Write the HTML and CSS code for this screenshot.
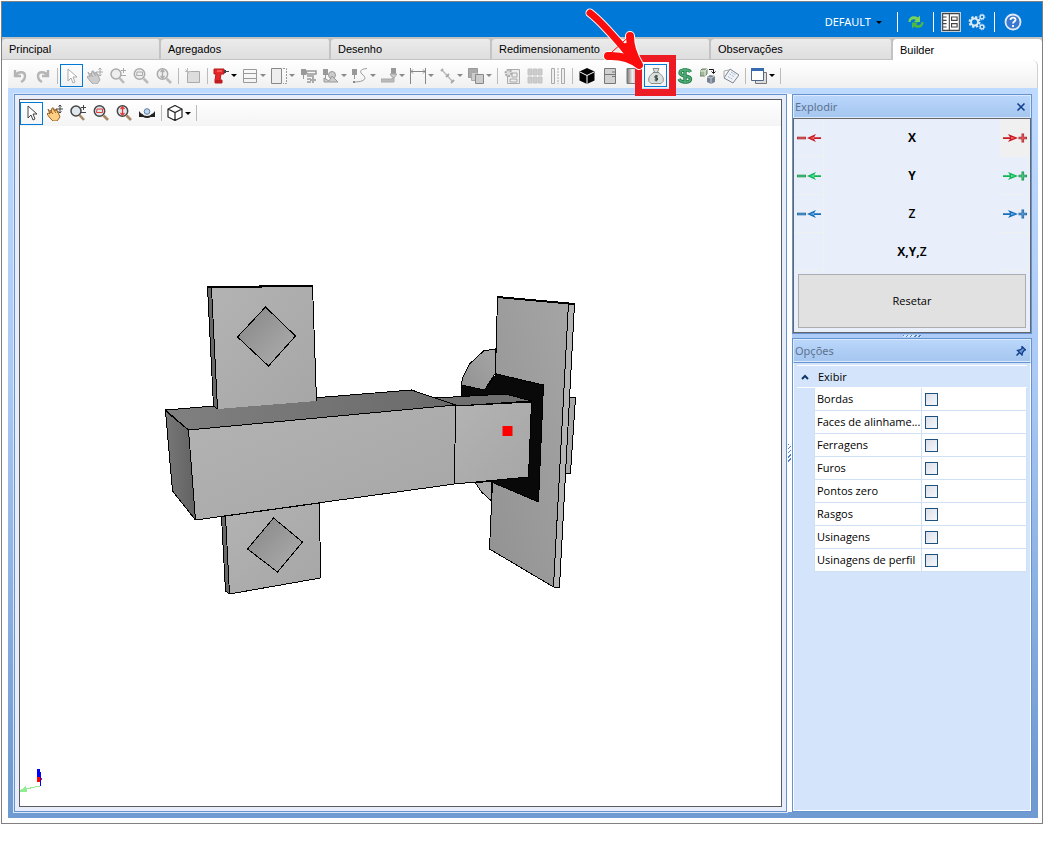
FILE: index.html
```html
<!DOCTYPE html>
<html lang="pt-BR">
<head>
<meta charset="utf-8">
<title>Builder</title>
<link rel="stylesheet" href="styles.css">
</head>
<body>
<svg class="defs" aria-hidden="true">
  <defs>
    <linearGradient id="steel"><stop offset="0" stop-color="#777"/><stop offset=".45" stop-color="#eee"/><stop offset="1" stop-color="#999"/></linearGradient>
    <linearGradient id="front" x1="0" y1="0" x2="1" y2="1"><stop offset="0" stop-color="#b3b3b3"/><stop offset="1" stop-color="#a6a6a6"/></linearGradient>
    <linearGradient id="plate" x1="0" y1="1" x2="1" y2="0"><stop offset="0" stop-color="#929292"/><stop offset="1" stop-color="#a5a5a5"/></linearGradient>
    <linearGradient id="pocket" x1="0" y1="0" x2="1" y2="1"><stop offset="0" stop-color="#858585"/><stop offset="1" stop-color="#b0b0b0"/></linearGradient>
    <linearGradient id="top"><stop offset="0" stop-color="#808080"/><stop offset="1" stop-color="#6a6a6a"/></linearGradient>
    <linearGradient id="side"><stop offset="0" stop-color="#777"/><stop offset="1" stop-color="#626262"/></linearGradient>
    <symbol id="undo" viewBox="0 0 16 16"><path d="M3 2v6h6M3 8c3-5 10-5 10 0 0 3-2 5-4 6" fill="none" stroke="#b5b5b5" stroke-width="2.4"/></symbol>
    <symbol id="redo" viewBox="0 0 16 16"><path d="M13 2v6H7M13 8C10 3 3 3 3 8c0 3 2 5 4 6" fill="none" stroke="#b5b5b5" stroke-width="2.4"/></symbol>
    <symbol id="cursor" viewBox="0 0 16 16"><path d="M4 1v12l3-3 2 5 2-1-2-5h4z" fill="#fff" stroke="currentColor"/></symbol>
    <symbol id="hand" viewBox="0 0 16 16"><path d="M1 4l3 4 1-5 1.500 0L8 6l1-2 2 3 2 5-3 4H6l-3-3-3-4 1-1 2 1z" fill="var(--skin,#ccc)" stroke="var(--line,#aaa)"/><path d="M3 5l3 4M6 4l3 4M9 4l2 4" stroke="var(--line,#aaa)"/><path d="M13 0v8M9 4h7M11.500 1.500L13 0l1.500 1.500M11.500 6.500L13 8l1.500-1.500" fill="none" stroke="currentColor"/></symbol>
    <symbol id="lens" viewBox="0 0 16 16"><circle cx="6.500" cy="6" r="5.200" fill="var(--glass,#eee)" stroke="currentColor" stroke-width="1.500"/><path d="M10.500 10.500l4.500 4.500" stroke="var(--handle,#bbb)" stroke-width="2.600"/></symbol>
    <symbol id="zoompm" viewBox="0 0 16 16"><circle cx="6" cy="6" r="5" fill="var(--glass,#eee)" stroke="currentColor" stroke-width="1.500"/><path d="M9.500 10l4.500 5" stroke="var(--handle,#bbb)" stroke-width="2.600"/><path d="M13.500 0v5M11 2.500h5M11 7.500h5" stroke="currentColor"/></symbol>
    <symbol id="zoomwin" viewBox="0 0 16 16"><use href="#lens"/><path d="M4 4h5.500v3.500H3.500z" fill="none" stroke="var(--mark,#aaa)"/></symbol>
    <symbol id="zoomfit" viewBox="0 0 16 16"><use href="#lens"/><path d="M6.500 2v8M4.500 4l2-2 2 2M4.500 8l2 2 2-2" fill="none" stroke="var(--mark,#aaa)" stroke-width="1.300"/></symbol>
    <symbol id="new" viewBox="0 0 16 16"><path d="M2.500 3.500h12v11h-12z" fill="#ddd" stroke="#aaa"/><path d="M2.500 0v6M0 3.500h6M.5 1.500l4 4" stroke="#bbb"/></symbol>
    <symbol id="drill" viewBox="0 0 16 16"><path d="M1 1h10v5H8L7 12h2v3H2v-3l1-6H1z" fill="#e8262a" stroke="#b51a1a"/><path d="M11 2h2v3h-2zM13 3h3v1h-3z" fill="#444"/><path d="M2 13.500h7" stroke="#c01d20" stroke-width="3"/><path d="M4 3h5" stroke="#ff8d89"/></symbol>
    <symbol id="rows" viewBox="0 0 16 16"><path d="M1.500 1.500h13v13h-13zM1 5.500h14M1 10.500h14" fill="none" stroke="#999"/></symbol>
    <symbol id="cols" viewBox="0 0 16 16"><path d="M.5.5h10v15H.5z" fill="#eee" stroke="#888"/><path d="M12 .5h3.500v15H12" fill="none" stroke="#999" stroke-dasharray="2 1"/></symbol>
    <symbol id="spindle-list" viewBox="0 0 16 16"><path d="M0 1h5v6H0zM2 7h1v4H2z" fill="#999"/><path d="M5 3h10v3H6zM6 8h7M6 11h4M6 14h4" fill="none" stroke="#999" stroke-width="1.500"/><path d="M12 9v6M9 12h6" stroke="#aaa" stroke-width="2"/></symbol>
    <symbol id="spindle-shape" viewBox="0 0 16 16"><path d="M0 1h5v6H0zM2 7h1v4H2z" fill="#999"/><circle cx="9" cy="7" r="3.500" fill="#ccc" stroke="#999"/><path d="M1 14V10l5 3 3-5 6 6z" fill="#ccc" stroke="#999"/></symbol>
    <symbol id="curve" viewBox="0 0 16 16"><path d="M0 1h5v6H0zM2 7h1v4H2z" fill="#999"/><path d="M15 .5C8 1 7 4 11 7s2 7-9 7" fill="none" stroke="#999"/><path d="M1 14h2" stroke="#888" stroke-width="2"/></symbol>
    <symbol id="chamfer" viewBox="0 0 16 16"><path d="M10 0h5v6h-5z" fill="#999"/><path d="M9 6h7l-3 4-2-1z" fill="#ccc" stroke="#aaa"/><path d="M0 11h10l3-1v4H0z" fill="#bbb" stroke="#aaa"/></symbol>
    <symbol id="dim" viewBox="0 0 16 16"><path d="M.5 0v16M15.500 0v16M1 3.500h14M3 1.500l-2 2 2 2M13 1.500l2 2-2 2" fill="none" stroke="#888"/></symbol>
    <symbol id="segment" viewBox="0 0 16 16"><path d="M3 2l11 12" stroke="#bbb" stroke-width="1.500"/><path d="M2 3l2-2M7 9l3-3M12 15l3-3" stroke="#aaa" stroke-width="2"/></symbol>
    <symbol id="layers" viewBox="0 0 16 16"><path d="M.5.500h9v9h-9z" fill="#aaa" stroke="#999"/><path d="M3.500 4.500h6v8h-6z" fill="#ccc" stroke="#aaa"/><path d="M7.500 6.500h8v9h-8z" fill="#ccc" stroke="#888"/></symbol>
    <symbol id="calc" viewBox="0 0 16 16"><path d="M3.500 1.500h12v14h-12z" fill="#eee" stroke="#aaa"/><circle cx="4.500" cy="5" r="3" fill="#ddd" stroke="#aaa" stroke-width="2" stroke-dasharray="2 1"/><path d="M8 5h5v4H8zM6 11h7v3H6z" fill="none" stroke="#aaa"/></symbol>
    <symbol id="grid" viewBox="0 0 16 16"><path d="M1 1h4v6H1zM6 1h4v6H6zM11 1h4v6h-4zM1 9h4v6H1zM6 9h4v6H6zM11 9h4v6h-4z" fill="#ccc" stroke="#c4c4c4"/></symbol>
    <symbol id="mirror" viewBox="0 0 16 16"><path d="M1.500.500h3v15h-3zM11.500.500h3v15h-3z" fill="#eee" stroke="#aaa"/><path d="M8 0v16" stroke="#aaa" stroke-dasharray="2 1"/></symbol>
    <symbol id="solid" viewBox="0 0 16 16"><path d="M8 0l7.500 3.500v9L8 16 .5 12.500v-9z"/><path d="M1 4l7 3.500L15 4M8 7.500V16" fill="none" stroke="#fff"/></symbol>
    <symbol id="cabinet" viewBox="0 0 16 16"><path d="M2.500.500h11v15h-11zM2.500 6.500h11" fill="#d0d0d0" stroke="#777"/><path d="M10 4h3M10 8.500h3" stroke="#777"/></symbol>
    <symbol id="roller" viewBox="0 0 16 16"><path d="M2 .5h12v15H2z" fill="url(#steel)" stroke="#777"/></symbol>
    <symbol id="money" viewBox="0 0 16 16"><path d="M5 .5h6L9.500 4c5 3 6.500 6 5.500 9.500l-2 2H3l-2-2C0 10 1.500 7 6.500 4z" fill="#d9e0de" stroke="#86918e"/><path d="M5 4.500h6" stroke="#7e8986"/><path d="M10 8H7v2h2.500v2H6.500M8.200 7v6.500" fill="none" stroke="#35413b"/></symbol>
    <symbol id="dollar" viewBox="0 0 16 16"><path d="M13.500 4C12 1 3 1 3 5s10.500 2 10.500 6S4 15 2 11M8 0v16" fill="none" stroke="#247d4b" stroke-width="3.400"/><path d="M13.500 4C12 1 3 1 3 5s10.500 2 10.500 6S4 15 2 11M8 0v16" fill="none" stroke="#4fae77" stroke-width="1.600"/></symbol>
    <symbol id="blocks" viewBox="0 0 16 16"><path d="M0 3l2-2h5v5L5 8H0z" fill="#a2b999" stroke="#70806b"/><path d="M0 3h5v5M5 3l2-2" fill="none" stroke="#e5eedf"/><path d="M7 9l3-2 5 1v6l-4 2-4-2z" fill="#758290"/><path d="M7 9l4 1 4-2M11 10v6" fill="none" stroke="#c4cbd1"/><path d="M9 1.500h4.500V5M11.500 3.500l2 2 2-2" fill="none" stroke="#111"/></symbol>
    <symbol id="note" viewBox="0 0 16 16"><path d="M7 1l9 6-6 8-9-5z" fill="#f1f3f6" stroke="#7d8490"/><path d="M8 4l5 3M6.500 6l5 3M5 8.500l5 3" stroke="#9eb3d2" stroke-dasharray="2 1"/><path d="M1 3l5-1M1 3v6" stroke="#aaa"/></symbol>
    <symbol id="windows" viewBox="0 0 16 16"><path d="M4.500 4.500h11v11h-11z" fill="#ddd" stroke="#777"/><path d="M.5.500h12v12H.500z" fill="#fff" stroke="#4e6687"/><path d="M0 1.500h13" stroke="#376bb0" stroke-width="3"/></symbol>
    <symbol id="orbit" viewBox="0 0 16 16"><path d="M2 9c3 4 9 4 12 0" fill="none" stroke="#222" stroke-width="2"/><path d="M0 6v6h5zM16 6v6h-5z" fill="#222"/><circle cx="8" cy="6.500" r="2.800" fill="#bdd5ee" stroke="#587da9"/></symbol>
    <symbol id="cube" viewBox="0 0 16 16"><path d="M8 .5l7 3.500v8l-7 3.500L1 12V4zM1 4l7 3.500L15 4M8 7.500v8" fill="#fff" stroke="#222" stroke-width="1.200"/></symbol>
    <symbol id="minus-arrow" viewBox="0 0 24 10"><path d="M0 5h9" stroke="var(--dark)" stroke-width="2.600"/><path d="M1 5h7" stroke="var(--light)" stroke-width=".6"/><path d="M10 5l9-4-2 3.300h7v1.700h-7L19 9z" fill="currentColor"/><path d="M13 5l4-1v2z" fill="var(--light)"/></symbol>
    <symbol id="plus-arrow" viewBox="0 0 24 10"><path d="M15 5L5 1l2 3.300H0V6h7L5 9z" fill="currentColor"/><path d="M12 5L8 4v2z" fill="var(--light)"/><path d="M15.500 5H24M19.800 .5v9" stroke="var(--dark)" stroke-width="2.600"/><path d="M16 5h7M19.800 1.500v7" stroke="var(--light)" stroke-width=".6"/></symbol>
  </defs>
</svg>

<div class="app">
  <header class="titlebar">
    <button class="profile">DEFAULT <i class="caret"></i></button>
    <button class="head-btn" aria-label="Atualizar"><svg viewBox="0 0 18 18"><path d="M1.500 9c0-6 6-7 9.500-4.500l2-2V9H7l2-2C6.500 5.500 4 6 3.500 9z" fill="#79d355"/><path d="M16.500 9c0 6-6 7-9.500 4.500l-2 2V9.500h6l-2 2c2.500 1.500 5 1 5.500-2.500z" fill="#4fb83f"/></svg></button>
    <button class="head-btn pressed" aria-label="Formulário"><svg viewBox="0 0 18 18"><path d="M1.500 1.500h15v15h-15zM7.500 2v14M9.500 4.500h5v3h-5zM9.500 10.500h5v3h-5zM2 4.500h3M2 7.500h3M2 10.500h3M2 13.500h3" fill="#fff" stroke="#444"/></svg></button>
    <button class="head-btn gears" aria-label="Configurações"><svg viewBox="0 0 18 18" fill="none" stroke="#dcebf9"><circle cx="6.500" cy="9" r="3.500" stroke-width="2"/><circle cx="6.500" cy="9" r="5" stroke-width="2" stroke-dasharray="2.300 1.627"/><circle cx="14" cy="4" r="1.800" stroke-width="1.300"/><circle cx="14" cy="4" r="2.800" stroke-dasharray="1.300 .9"/><circle cx="14" cy="14" r="1.800" stroke-width="1.300"/><circle cx="14" cy="14" r="2.800" stroke-dasharray="1.300 .9"/></svg></button>
    <button class="head-btn help" aria-label="Ajuda"><svg viewBox="0 0 18 18"><circle cx="9" cy="9" r="7.500" fill="#3b79d1" stroke="#e2e9f4" stroke-width="1.800"/><path d="M6.500 7c0-3.500 5.500-3 5 0-.3 1.500-2.500 1.500-2.500 3.500M9 12v2" fill="none" stroke="#fff" stroke-width="1.800"/></svg></button>
  </header>

  <nav class="tabs" role="tablist">
    <button role="tab">Principal</button>
    <button role="tab">Agregados</button>
    <button role="tab">Desenho</button>
    <button role="tab">Redimensionamento</button>
    <button role="tab">Observações</button>
    <button role="tab" aria-selected="true">Builder</button>
  </nav>

  <main class="workspace">
    <div class="toolbar main-tools" role="toolbar">
      <button aria-label="Desfazer"><svg><use href="#undo"/></svg></button>
      <button aria-label="Refazer"><svg><use href="#redo"/></svg></button>
      <span class="sep"></span>
      <button class="active" aria-label="Selecionar"><svg><use href="#cursor"/></svg></button>
      <button aria-label="Mover"><svg><use href="#hand"/></svg></button>
      <button aria-label="Zoom"><svg><use href="#zoompm"/></svg></button>
      <button aria-label="Zoom janela"><svg><use href="#zoomwin"/></svg></button>
      <button aria-label="Zoom total"><svg><use href="#zoomfit"/></svg></button>
      <span class="sep"></span>
      <button aria-label="Novo"><svg><use href="#new"/></svg></button>
      <span class="sep"></span>
      <button class="drop on" aria-label="Furo"><svg><use href="#drill"/></svg><i class="caret"></i></button>
      <button class="drop" aria-label="Linhas"><svg><use href="#rows"/></svg><i class="caret"></i></button>
      <button class="drop" aria-label="Colunas"><svg><use href="#cols"/></svg><i class="caret"></i></button>
      <button aria-label="Lista de usinagens"><svg><use href="#spindle-list"/></svg></button>
      <button class="drop" aria-label="Forma"><svg><use href="#spindle-shape"/></svg><i class="caret"></i></button>
      <button class="drop" aria-label="Curva"><svg><use href="#curve"/></svg><i class="caret"></i></button>
      <button class="drop" aria-label="Chanfro"><svg><use href="#chamfer"/></svg><i class="caret"></i></button>
      <button class="drop" aria-label="Cota"><svg><use href="#dim"/></svg><i class="caret"></i></button>
      <button class="drop" aria-label="Segmento"><svg><use href="#segment"/></svg><i class="caret"></i></button>
      <button class="drop" aria-label="Camadas"><svg><use href="#layers"/></svg><i class="caret"></i></button>
      <span class="sep"></span>
      <button aria-label="Propriedades"><svg><use href="#calc"/></svg></button>
      <button aria-label="Matriz"><svg><use href="#grid"/></svg></button>
      <button aria-label="Espelhar"><svg><use href="#mirror"/></svg></button>
      <span class="sep"></span>
      <button aria-label="3D"><svg><use href="#solid"/></svg></button>
      <button aria-label="Gabinete"><svg><use href="#cabinet"/></svg></button>
      <button aria-label="Material"><svg><use href="#roller"/></svg></button>
      <button class="active callout" aria-label="Orçamento"><svg><use href="#money"/></svg>
        <svg class="pointer" viewBox="0 0 64 68" fill="none" stroke-linecap="round" stroke-linejoin="round"><g stroke="#fff"><path d="M8 9C16 15 31 31 50 54" stroke-width="9"/><path d="M48 32q0 14 9 29-12-10-31-9" stroke-width="10"/></g><g stroke="#fb0d0d"><path d="M8 9C16 15 31 31 50 54" stroke-width="7"/><path d="M48 32q0 14 9 29-12-10-31-9z" stroke-width="1"/><path d="M48 32q0 14 9 29-12-10-31-9" stroke-width="8"/><path d="M44 44l8 11" stroke-width="10"/></g></svg>
      </button>
      <span class="sep"></span>
      <button aria-label="Preço"><svg><use href="#dollar"/></svg></button>
      <button aria-label="Explodir"><svg><use href="#blocks"/></svg></button>
      <button aria-label="Notas"><svg><use href="#note"/></svg></button>
      <span class="sep"></span>
      <button class="drop on" aria-label="Janelas"><svg><use href="#windows"/></svg><i class="caret"></i></button>
      <span class="sep"></span>
    </div>

    <div class="dock">
      <section class="document">
        <div class="viewer">
          <div class="toolbar view-tools" role="toolbar">
            <button class="active" aria-label="Selecionar"><svg><use href="#cursor"/></svg></button>
            <button aria-label="Mover"><svg><use href="#hand"/></svg></button>
            <button aria-label="Zoom"><svg><use href="#zoompm"/></svg></button>
            <button aria-label="Zoom janela"><svg><use href="#zoomwin"/></svg></button>
            <button aria-label="Zoom total"><svg><use href="#zoomfit"/></svg></button>
            <button aria-label="Orbitar"><svg><use href="#orbit"/></svg></button>
            <span class="sep"></span>
            <button class="drop on" aria-label="Vistas"><svg><use href="#cube"/></svg><i class="caret"></i></button>
            <span class="sep"></span>
          </div>
          <svg class="scene" viewBox="20 126 760 680" role="img" aria-label="Modelo 3D">
            <g stroke="#000" stroke-linejoin="round" shape-rendering="crispEdges">
              <path d="M569 397l6 1-5 75-5 1z" fill="#a8a8a8"/>
              <path d="M461 385l1-7 7-14 14-13 12-2v24l-11 17z" fill="url(#plate)"/>
              <path d="M475 483l6 9 10 9v-20z" fill="#aaa"/>
              <path d="M497 297l71 6-15 284-64-38 3-67 3-109z" fill="url(#plate)"/>
              <path d="M568 303l6 1-15 283h-6z" fill="#b4b4b4"/>
              <path d="M497 297l77 7" stroke-width="2"/>
              <path d="M461 385l23 5 12-16 47 11-5 117-47-20-30-85z" fill="#090909"/>
              <path d="M435 398l70-4 26 7-76 5z" fill="#707070"/>
              <path d="M455 406l76-4-3 75-74 7z" fill="url(#front)"/>
              <path d="M165 410l246-20 44 15-267 25z" fill="url(#top)"/>
              <path d="M165 411l23 19 7 90-23-29z" fill="url(#side)"/>
              <path d="M188 430l267-25-1 79-259 36z" fill="url(#front)"/>
              <path d="M207 287l4 1 6 121-4-3z" fill="#686868"/>
              <path d="M217 409l-6-121 101-2 4 115z" fill="url(#front)" stroke="none"/>
              <path d="M217 409l-6-121 101-2 4 115" fill="none"/>
              <path d="M207 287l105-1" stroke-width="2"/>
              <path d="M265 307l30 29-27 30-31-29z" fill="url(#pocket)"/>
              <path d="M221 517l4-1 4 78-4-3z" fill="#686868"/>
              <path d="M225 516l94-13 1 75-91 16z" fill="url(#front)"/>
              <path d="M273 518l29 24-25 30-30-23z" fill="url(#pocket)"/>
            </g>
            <path d="M502 426h10v10h-10z" fill="#f00"/>
            <g shape-rendering="crispEdges"><path d="M39 786l-18 4" stroke="#90ee90"/><path d="M20 791l5-4 1 4z" fill="#90ee90" stroke="#90ee90"/><path d="M36 777h4l2 2-2 3h-4z" fill="#f00"/><path d="M39.500 774v12" stroke="#00f"/><path d="M37 769h2l2 5-2 3h-2l-1-3z" fill="#00f"/></g>
          </svg>
        </div>
      </section>
      <div class="grip vertical"></div>
      <aside class="side">
        <section class="panel explode">
          <h2>Explodir <button aria-label="Fechar"><svg viewBox="0 0 10 10"><path d="M1.500 1.500l7 7M8.500 1.500l-7 7" stroke="#123f8c" stroke-width="1.600"/></svg></button></h2>
          <div class="explode-body">
            <div class="axes">
              <button class="red" aria-label="Menos X"><svg><use href="#minus-arrow"/></svg></button><b>X</b><button class="red hover" aria-label="Mais X"><svg><use href="#plus-arrow"/></svg></button>
              <button class="green" aria-label="Menos Y"><svg><use href="#minus-arrow"/></svg></button><b>Y</b><button class="green" aria-label="Mais Y"><svg><use href="#plus-arrow"/></svg></button>
              <button class="blue" aria-label="Menos Z"><svg><use href="#minus-arrow"/></svg></button><b class="medium">Z</b><button class="blue" aria-label="Mais Z"><svg><use href="#plus-arrow"/></svg></button>
              <span class="cell"></span><b>X,Y,<span class="medium">Z</span></b><span class="cell"></span>
            </div>
            <button class="reset">Resetar</button>
          </div>
        </section>
        <div class="grip horizontal"></div>
        <section class="panel options">
          <h2>Opções <button aria-label="Fixar"><svg viewBox="0 0 10 10"><path d="M6 .5l3.500 3.500-1.500.5-1.500 2-.5 2.500-4.500-4.500 2.500-.5 2-1.500z" fill="#6c94cf" stroke="#123f8c" stroke-width="1.300"/><path d="M3.500 6.500L.5 9.500" stroke="#123f8c" stroke-width="1.500"/></svg></button></h2>
          <div class="options-body">
            <div class="property-grid">
              <button class="group"><svg viewBox="0 0 8 6"><path d="M1 5l3-3 3 3" fill="none" stroke="#123768" stroke-width="2"/></svg>Exibir</button>
              <div class="prop"><label for="p1">Bordas</label><span><input id="p1" type="checkbox"></span></div>
              <div class="prop"><label for="p2">Faces de alinhame...</label><span><input id="p2" type="checkbox"></span></div>
              <div class="prop"><label for="p3">Ferragens</label><span><input id="p3" type="checkbox"></span></div>
              <div class="prop"><label for="p4">Furos</label><span><input id="p4" type="checkbox"></span></div>
              <div class="prop"><label for="p5">Pontos zero</label><span><input id="p5" type="checkbox"></span></div>
              <div class="prop"><label for="p6">Rasgos</label><span><input id="p6" type="checkbox"></span></div>
              <div class="prop"><label for="p7">Usinagens</label><span><input id="p7" type="checkbox"></span></div>
              <div class="prop"><label for="p8">Usinagens de perfil</label><span><input id="p8" type="checkbox"></span></div>
            </div>
          </div>
        </section>
      </aside>
    </div>
  </main>
</div>
</body>
</html>
```
FILE: styles.css
```css
* { box-sizing: border-box; }
body { margin: 0; background: #fff; color: #000; font: 11px/16px "Open Sans", "Noto Sans", sans-serif; }
button { margin: 0; padding: 0; border: 0; background: none; color: inherit; font: inherit; }
svg { display: block; }
.defs { position: absolute; width: 0; height: 0; }
.app { display: flex; flex-direction: column; min-height: calc(100vh - 31px); margin: 1px 7px 30px 1px; border: 1px solid #808080; }

.titlebar { display: flex; align-items: center; justify-content: flex-end; height: 35px; padding: 5px 12px 0 0; background: #0078d7; color: #fff; }
.profile { display: flex; align-items: center; gap: 5px; padding-right: 15px; font-family: "Noto Sans", sans-serif; }
.profile .caret { border-top-color: #000; }
.head-btn { display: grid; place-items: center; width: 36px; height: 20px; border-left: 1px solid #fff; }
.head-btn svg { width: 18px; height: 18px; }
.head-btn.pressed { width: 34px; }
.head-btn.pressed svg { width: 20px; height: 20px; background: #c4ced8; }
.head-btn.gears { width: 27px; padding-right: 8px; border-left: 0; }
.caret { width: 0; height: 0; border: 3px solid transparent; border-top-color: #888; border-bottom: 0; }

.tabs { display: grid; grid-template-columns: 159fr 170fr 161fr 219fr 182fr 149fr; height: 23px; padding-top: 1px; background: #c3c3c3; font: 11px/20px "Liberation Sans", Arial, sans-serif; }
.tabs button { padding: 0 7px; border-top: 1px solid #c3c3c3; border-right: 2px solid #c3c3c3; border-bottom: 1px solid #c3c3c3; border-radius: 4px 4px 0 0; background: linear-gradient(#ebebeb, #dedede); text-align: left; }
.tabs [aria-selected] { border-right: 0; border-bottom: 0; background: #fff; }

.workspace { display: flex; flex: 1; flex-direction: column; padding: 0 4px 5px 6px; }
.toolbar { display: flex; align-items: center; background: linear-gradient(#fff, #f0f0f0); color: #aaa; }
.toolbar button { display: flex; flex: none; align-items: center; justify-content: center; width: 23px; height: 23px; }
.toolbar button > svg { width: 16px; height: 16px; }
.toolbar .drop { justify-content: flex-start; gap: 2px; width: 29px; padding-left: 3px; }
.drop .caret { flex: none; }
.drop.on .caret { border-top-color: #000; }
.toolbar .active { border: 1px solid #0078d7; }
.sep { flex: none; width: 1px; height: 16px; margin: 0 2px 0 3px; background: #bbb; }
.main-tools { align-items: flex-start; height: 28px; padding-top: 4px; border-right: 1px solid #d0d0d0; border-radius: 0 6px 0 0; }
.main-tools .sep { margin-top: 4px; }
.toolbar .callout { position: relative; outline: 7px solid #ed1c24; outline-offset: 2px; }
.toolbar .callout .pointer { position: absolute; top: -61px; left: -63px; z-index: 2; width: 64px; height: 68px; }

.dock { display: flex; flex: 1; padding: 6px; background: linear-gradient(#bfdaff, #aac9f5 40%, #6f9ad2 95%); }
.document { display: flex; flex: 1; min-width: 0; padding: 4px; border: 1px solid #6593cf; outline: 1px solid #dce8fa; background: #e7eefa; }
.viewer { display: flex; flex: 1; flex-direction: column; min-width: 0; border: 1px solid #5d5b5f; background: #fff; }
.view-tools { height: 26px; color: #444; background: linear-gradient(#fff, #f4f4f4); --skin: #ffd083; --line: #9a6329; --glass: #e0e8ef; --handle: #a98964; --mark: #e43b35; }
.scene { flex: 1 1 0; width: 100%; height: 0; min-height: 0; }
.grip { display: grid; place-items: center; }
.grip::before { content: ""; }
.grip.vertical { width: 5px; background: #fff; }
.grip.vertical::before { width: 3px; height: 18px; background: repeating-linear-gradient(135deg, #4c7fca 0 1px, #fff 1px 3px); }
.grip.horizontal { height: 4px; }
.grip.horizontal::before { width: 18px; height: 2px; background: repeating-linear-gradient(135deg, #4c7fca 0 1px, #dce9fb 1px 3px); }

.side { display: flex; flex: none; flex-direction: column; width: 240px; }
.panel { border: 1px solid #6593cf; }
.panel h2 { display: flex; align-items: center; justify-content: space-between; height: 23px; margin: 0; padding: 0 4px 0 1px; border: 1px solid #dceafc; background: linear-gradient(#bad6fb, #a5c6ef); color: #5d7290; font: 11px/16px "Noto Sans", sans-serif; }
.panel h2 svg { width: 10px; height: 10px; }
.explode-body { padding: 0 4px 4px 0; border: 1px solid #666; background: #e8effb; }
.axes { display: grid; grid-template-columns: 30px 1fr 30px; grid-auto-rows: 38px; margin-right: -4px; }
.axes > button, .cell { display: grid; place-items: center; border: solid #f0f0f0; border-width: 0 1px 1px 0; }
.axes > .hover { background: #f0f0f0; }
.axes svg { width: 24px; height: 10px; }
.axes b { display: grid; grid-auto-flow: column; place-content: center; font-size: 12px; font-weight: 700; }
.axes .medium { font-weight: 600; }
.red { color: #c91822; --dark: #b23238; --light: #ff7778; }
.green { color: #12b456; --dark: #279553; --light: #67eda0; }
.blue { color: #176eb9; --dark: #2b6ca5; --light: #72b9f4; }
.reset { display: block; width: calc(100% - 4px); height: 54px; margin: 3px 0 0 4px; border: 1px solid #adadad; background: #e1e1e1; }
.options { display: flex; flex: 1; flex-direction: column; }
.options-body { flex: 1; padding: 2px 3px 3px; border: 1px solid #fff; border-top: 1px solid #6593cf; background: #d4e5fb; }
.property-grid { padding-left: 17px; border-top: 1px solid #fff; }
.group { display: flex; align-items: center; gap: 9px; width: calc(100% + 17px); height: 22px; margin-left: -17px; padding-left: 4px; border-bottom: 1px solid #fff; }
.group svg { width: 8px; height: 6px; }
.prop { display: grid; grid-template-columns: 107px 1fr; height: 23px; border: 1px solid #d0e0f5; border-top: 0; background: #fff; }
.prop label { overflow: hidden; padding: 3px 3px 0 2px; border-right: 1px solid #d0e0f5; white-space: nowrap; }
.prop > span { display: flex; align-items: center; padding-left: 3px; }
.prop input { appearance: none; width: 13px; height: 13px; margin: 0; border: 1px solid #1c5180; background: linear-gradient(135deg, #dcdfe8, #f6f7fb); }
```
